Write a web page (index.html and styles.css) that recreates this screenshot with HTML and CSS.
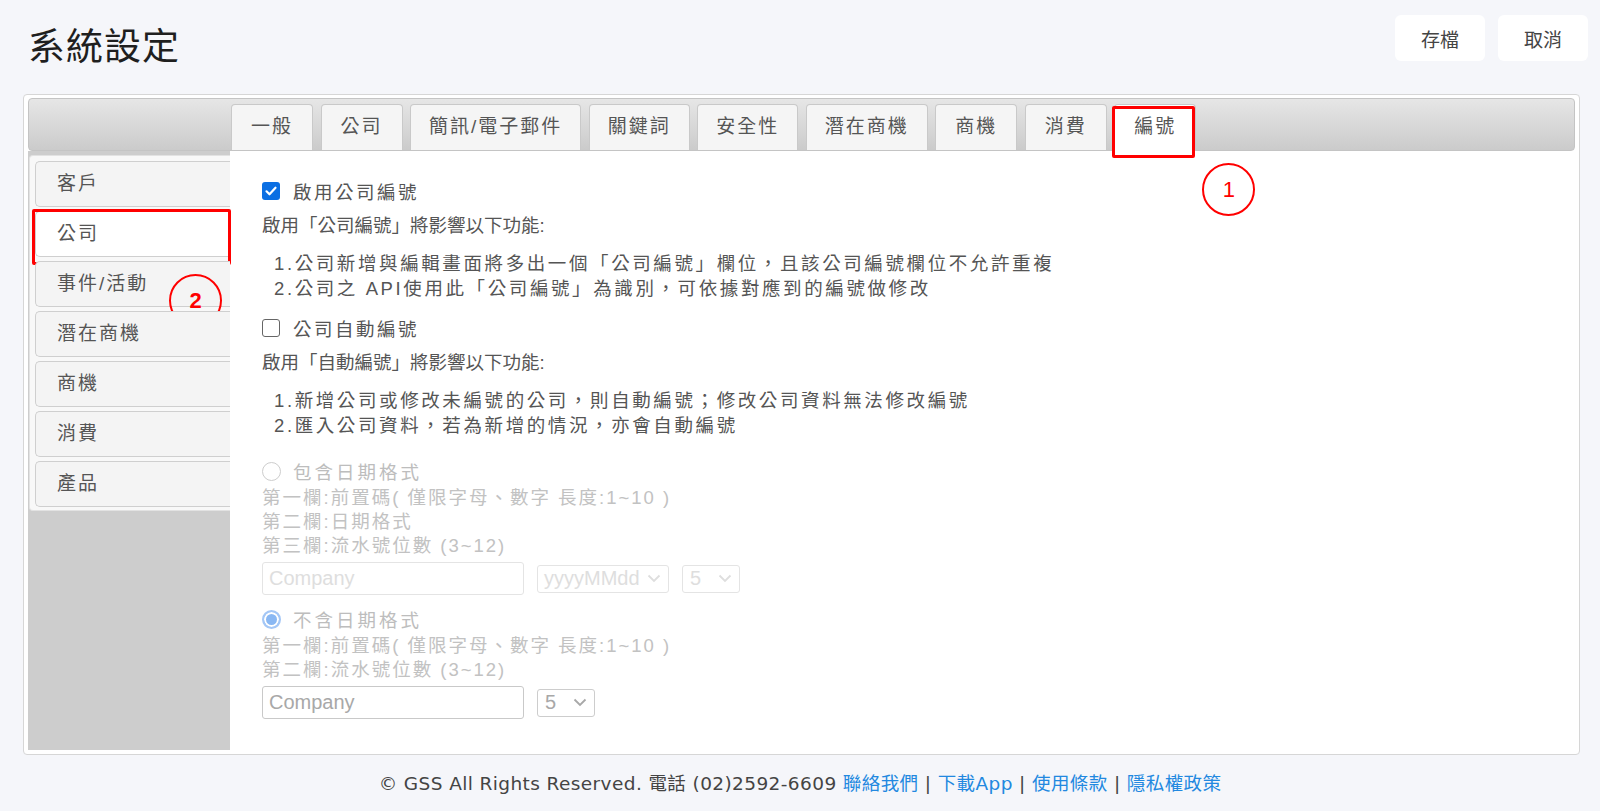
FILE: index.html
```html
<!DOCTYPE html>
<html lang="zh-Hant">
<head>
    <meta charset="UTF-8">
    <meta name="viewport" content="width=device-width, initial-scale=1.0">
    <title>系統設定</title>
    <link rel="stylesheet" href="styles.css">
</head>
<body>

    <div class="page-head">
        <h1 class="page-title">系統設定</h1>
        <div class="head-actions">
            <button class="head-btn">存檔</button>
            <button class="head-btn">取消</button>
        </div>
    </div>

    <div class="panel">
        <div class="tabbar">
            <div class="tab">一般</div>
            <div class="tab">公司</div>
            <div class="tab">簡訊/電子郵件</div>
            <div class="tab">關鍵詞</div>
            <div class="tab">安全性</div>
            <div class="tab">潛在商機</div>
            <div class="tab">商機</div>
            <div class="tab">消費</div>
            <div class="tab active">編號
                <span class="mark-box mark-tab"></span>
                <span class="mark-num mark-num-1">1</span>
            </div>
        </div>

        <div class="panel-body">
            <div class="sidebar">
                <div class="side-list">
                    <div class="side-item">客戶</div>
                    <div class="side-item active">公司
                        <span class="mark-box mark-side"></span>
                    </div>
                    <div class="side-item">事件/活動
                        <span class="mark-num mark-num-2">2</span>
                    </div>
                    <div class="side-item">潛在商機</div>
                    <div class="side-item">商機</div>
                    <div class="side-item">消費</div>
                    <div class="side-item">產品</div>
                </div>
            </div>

            <div class="content">
                <div class="opt">
                    <span class="check on">
                        <svg width="14" height="14" viewBox="0 0 14 14"><path d="M2.5 7.3l3 3 6-6.6" fill="none" stroke="#fff" stroke-width="2.2" stroke-linecap="round" stroke-linejoin="round"/></svg>
                    </span>
                    <span class="opt-label">啟用公司編號</span>
                </div>
                <div class="note">啟用「公司編號」將影響以下功能:</div>
                <div class="steps">
                    <div>1.公司新增與編輯畫面將多出一個「公司編號」欄位，且該公司編號欄位不允許重複</div>
                    <div>2.公司之 API使用此「公司編號」為識別，可依據對應到的編號做修改</div>
                </div>

                <div class="opt opt-2">
                    <span class="check"></span>
                    <span class="opt-label">公司自動編號</span>
                </div>
                <div class="note">啟用「自動編號」將影響以下功能:</div>
                <div class="steps">
                    <div>1.新增公司或修改未編號的公司，則自動編號；修改公司資料無法修改編號</div>
                    <div>2.匯入公司資料，若為新增的情況，亦會自動編號</div>
                </div>

                <div class="fmt">
                    <div class="radio-row">
                        <span class="radio"></span>
                        <span class="radio-label">包含日期格式</span>
                    </div>
                    <div class="fmt-lines">
                        <div>第一欄:前置碼( 僅限字母、數字 長度:1~10 )</div>
                        <div>第二欄:日期格式</div>
                        <div>第三欄:流水號位數 (3~12)</div>
                    </div>
                    <div class="field-row faded">
                        <div class="text-field">Company</div>
                        <div class="select-field wide">yyyyMMdd
                            <svg width="14" height="9" viewBox="0 0 14 9"><path d="M1.5 1.5l5.5 5.5 5.5-5.5" fill="none" stroke="currentColor" stroke-width="1.8"/></svg>
                        </div>
                        <div class="select-field">5
                            <svg width="14" height="9" viewBox="0 0 14 9"><path d="M1.5 1.5l5.5 5.5 5.5-5.5" fill="none" stroke="currentColor" stroke-width="1.8"/></svg>
                        </div>
                    </div>
                </div>

                <div class="fmt fmt-2">
                    <div class="radio-row">
                        <span class="radio on"></span>
                        <span class="radio-label">不含日期格式</span>
                    </div>
                    <div class="fmt-lines">
                        <div>第一欄:前置碼( 僅限字母、數字 長度:1~10 )</div>
                        <div>第二欄:流水號位數 (3~12)</div>
                    </div>
                    <div class="field-row">
                        <div class="text-field">Company</div>
                        <div class="select-field">5
                            <svg width="14" height="9" viewBox="0 0 14 9"><path d="M1.5 1.5l5.5 5.5 5.5-5.5" fill="none" stroke="currentColor" stroke-width="1.8"/></svg>
                        </div>
                    </div>
                </div>
            </div>
        </div>
    </div>

    <div class="footer">
        © GSS All Rights Reserved. 電話 (02)2592-6609
        <a href="#">聯絡我們</a> | <a href="#">下載App</a> | <a href="#">使用條款</a> | <a href="#">隱私權政策</a>
    </div>

</body>
</html>
```

FILE: styles.css
```css
body {
    margin: 0;
    background-color: #f5f6fa;
    font-family: "Liberation Sans", "Noto Sans CJK TC", sans-serif;
    color: #555;
}

/* header */
.page-head {
    display: flex;
    justify-content: space-between;
    align-items: flex-start;
    height: 94px;
    padding: 0 12px 0 28px;
}

.page-title {
    margin: 26px 0 0;
    font-size: 37px;
    line-height: 44px;
    letter-spacing: 1px;
    font-weight: normal;
    color: #1f1f1f;
}

.head-actions {
    display: flex;
    gap: 13px;
    margin-top: 15px;
}

.head-btn {
    width: 90px;
    height: 46px;
    border: none;
    border-radius: 6px;
    background-color: #fff;
    font-family: inherit;
    font-size: 19px;
    color: #444;
    cursor: pointer;
}

/* main panel */
.panel {
    box-sizing: border-box;
    width: 1557px;
    height: 661px;
    margin-left: 23px;
    padding: 3px 4px 4px 4px;
    background-color: #fff;
    border: 1px solid #d6d6d6;
    border-radius: 4px;
    display: flex;
    flex-direction: column;
}

.tabbar {
    box-sizing: border-box;
    height: 53px;
    flex-shrink: 0;
    display: flex;
    align-items: flex-end;
    gap: 7.5px;
    padding-left: 202px;
    border: 1px solid #c4c4c4;
    border-radius: 4px;
    background: linear-gradient(#e6e6e6, #cbcbcb);
}

.tab {
    position: relative;
    box-sizing: border-box;
    min-width: 82px;
    height: 46px;
    padding: 0 18px;
    line-height: 44px;
    text-align: center;
    font-size: 19px;
    letter-spacing: 2px;
    color: #555;
    background-color: #f5f5f5;
    border: 1px solid #c9c9c9;
    border-bottom: none;
    border-radius: 4px 4px 0 0;
}

.tab.active {
    height: 47px;
    margin-bottom: -1px;
    background-color: #fff;
}

.panel-body {
    flex: 1;
    display: flex;
}

/* left menu */
.sidebar {
    width: 202px;
    flex-shrink: 0;
    background-color: #cdcdcd;
    padding-top: 4px;
}

.side-list {
    margin-left: 1px;
    padding: 5px 0 3px 5px;
    background-color: #f8f8f8;
    border: 1px solid #e2e2e2;
    border-right: none;
    border-radius: 4px 0 0 4px;
}

.side-item {
    position: relative;
    box-sizing: border-box;
    height: 46px;
    margin-bottom: 4px;
    padding-left: 21px;
    line-height: 44px;
    font-size: 19px;
    letter-spacing: 2px;
    color: #555;
    background-color: #f4f4f4;
    border: 1px solid #cfcfcf;
    border-right: none;
    border-radius: 5px 0 0 5px;
}

.side-item:last-child {
    margin-bottom: 0;
}

.side-item.active {
    background-color: #fff;
}

/* settings content */
.content {
    flex: 1;
    padding: 27px 0 0 32px;
    font-size: 18.5px;
}

.opt {
    display: flex;
    align-items: center;
    gap: 13px;
    height: 26px;
}

.opt-label {
    letter-spacing: 2.5px;
}

.opt-2 {
    margin-top: 14px;
}

.check {
    box-sizing: border-box;
    width: 18px;
    height: 18px;
    border: 1.6px solid #666;
    border-radius: 3px;
    background-color: #fff;
    display: flex;
    align-items: center;
    justify-content: center;
}

.check.on {
    border: none;
    background-color: #0b6fe3;
}

.note {
    margin-top: 9px;
    line-height: 26px;
}

.steps {
    margin-top: 12px;
    padding-left: 12px;
    line-height: 25px;
    letter-spacing: 2.6px;
}

.fmt {
    margin-top: 20px;
    color: #c2c2c2;
}

.fmt-2 {
    margin-top: 11px;
}

.radio-row {
    display: flex;
    align-items: center;
    gap: 12px;
    height: 26px;
    color: #bdbdbd;
}

.radio-label {
    letter-spacing: 3px;
}

.radio {
    box-sizing: border-box;
    width: 19px;
    height: 19px;
    border: 1.6px solid #cdcdcd;
    border-radius: 50%;
    background-color: #fff;
}

.radio.on {
    border: 2px solid #a4c7f6;
    background-color: #8ab8f3;
    box-shadow: inset 0 0 0 2px #fff;
}

.fmt-lines {
    margin-top: 2px;
    line-height: 24px;
    letter-spacing: 2px;
}

.field-row {
    display: flex;
    align-items: center;
    gap: 13px;
    margin-top: 4px;
}

.text-field {
    box-sizing: border-box;
    width: 262px;
    height: 33px;
    padding-left: 6px;
    line-height: 31px;
    font-size: 20px;
    color: #a8a8a8;
    border: 1px solid #c9c9c9;
    border-radius: 3px;
    background-color: #fff;
}

.select-field {
    box-sizing: border-box;
    display: flex;
    align-items: center;
    justify-content: space-between;
    width: 58px;
    height: 28px;
    padding: 0 7px 0 7px;
    font-size: 20px;
    color: #a8a8a8;
    border: 1px solid #cdcdcd;
    border-radius: 3px;
    background-color: #fff;
}

.select-field.wide {
    width: 132px;
    padding-left: 6px;
}

.faded .text-field,
.faded .select-field {
    color: #dedede;
    border-color: #e4e4e4;
}

/* red annotation marks */
.mark-box {
    position: absolute;
    border: 3px solid #f00;
    border-radius: 2px;
    pointer-events: none;
}

.mark-tab {
    left: -3px;
    right: 0;
    top: 1px;
    bottom: -7px;
}

.mark-side {
    left: -4px;
    right: -1px;
    top: -3px;
    bottom: -9px;
}

.mark-num {
    position: absolute;
    box-sizing: border-box;
    width: 53px;
    height: 53px;
    border: 2px solid #f00;
    border-radius: 50%;
    color: #f00;
    font-family: "Liberation Sans", sans-serif;
    font-size: 22px;
    font-weight: bold;
    letter-spacing: 0;
    line-height: 49px;
    text-align: center;
}

.mark-num-1 {
    left: 87px;
    top: 58px;
    font-weight: normal;
}

.mark-num-2 {
    left: 133px;
    top: 12px;
}

/* footer */
.footer {
    margin-top: 17px;
    text-align: center;
    font-family: "DejaVu Sans", "Noto Sans CJK TC", sans-serif;
    font-size: 18.5px;
    letter-spacing: 0.4px;
    line-height: 24px;
    color: #444;
}

.footer a {
    color: #2288e0;
    text-decoration: none;
}
```
